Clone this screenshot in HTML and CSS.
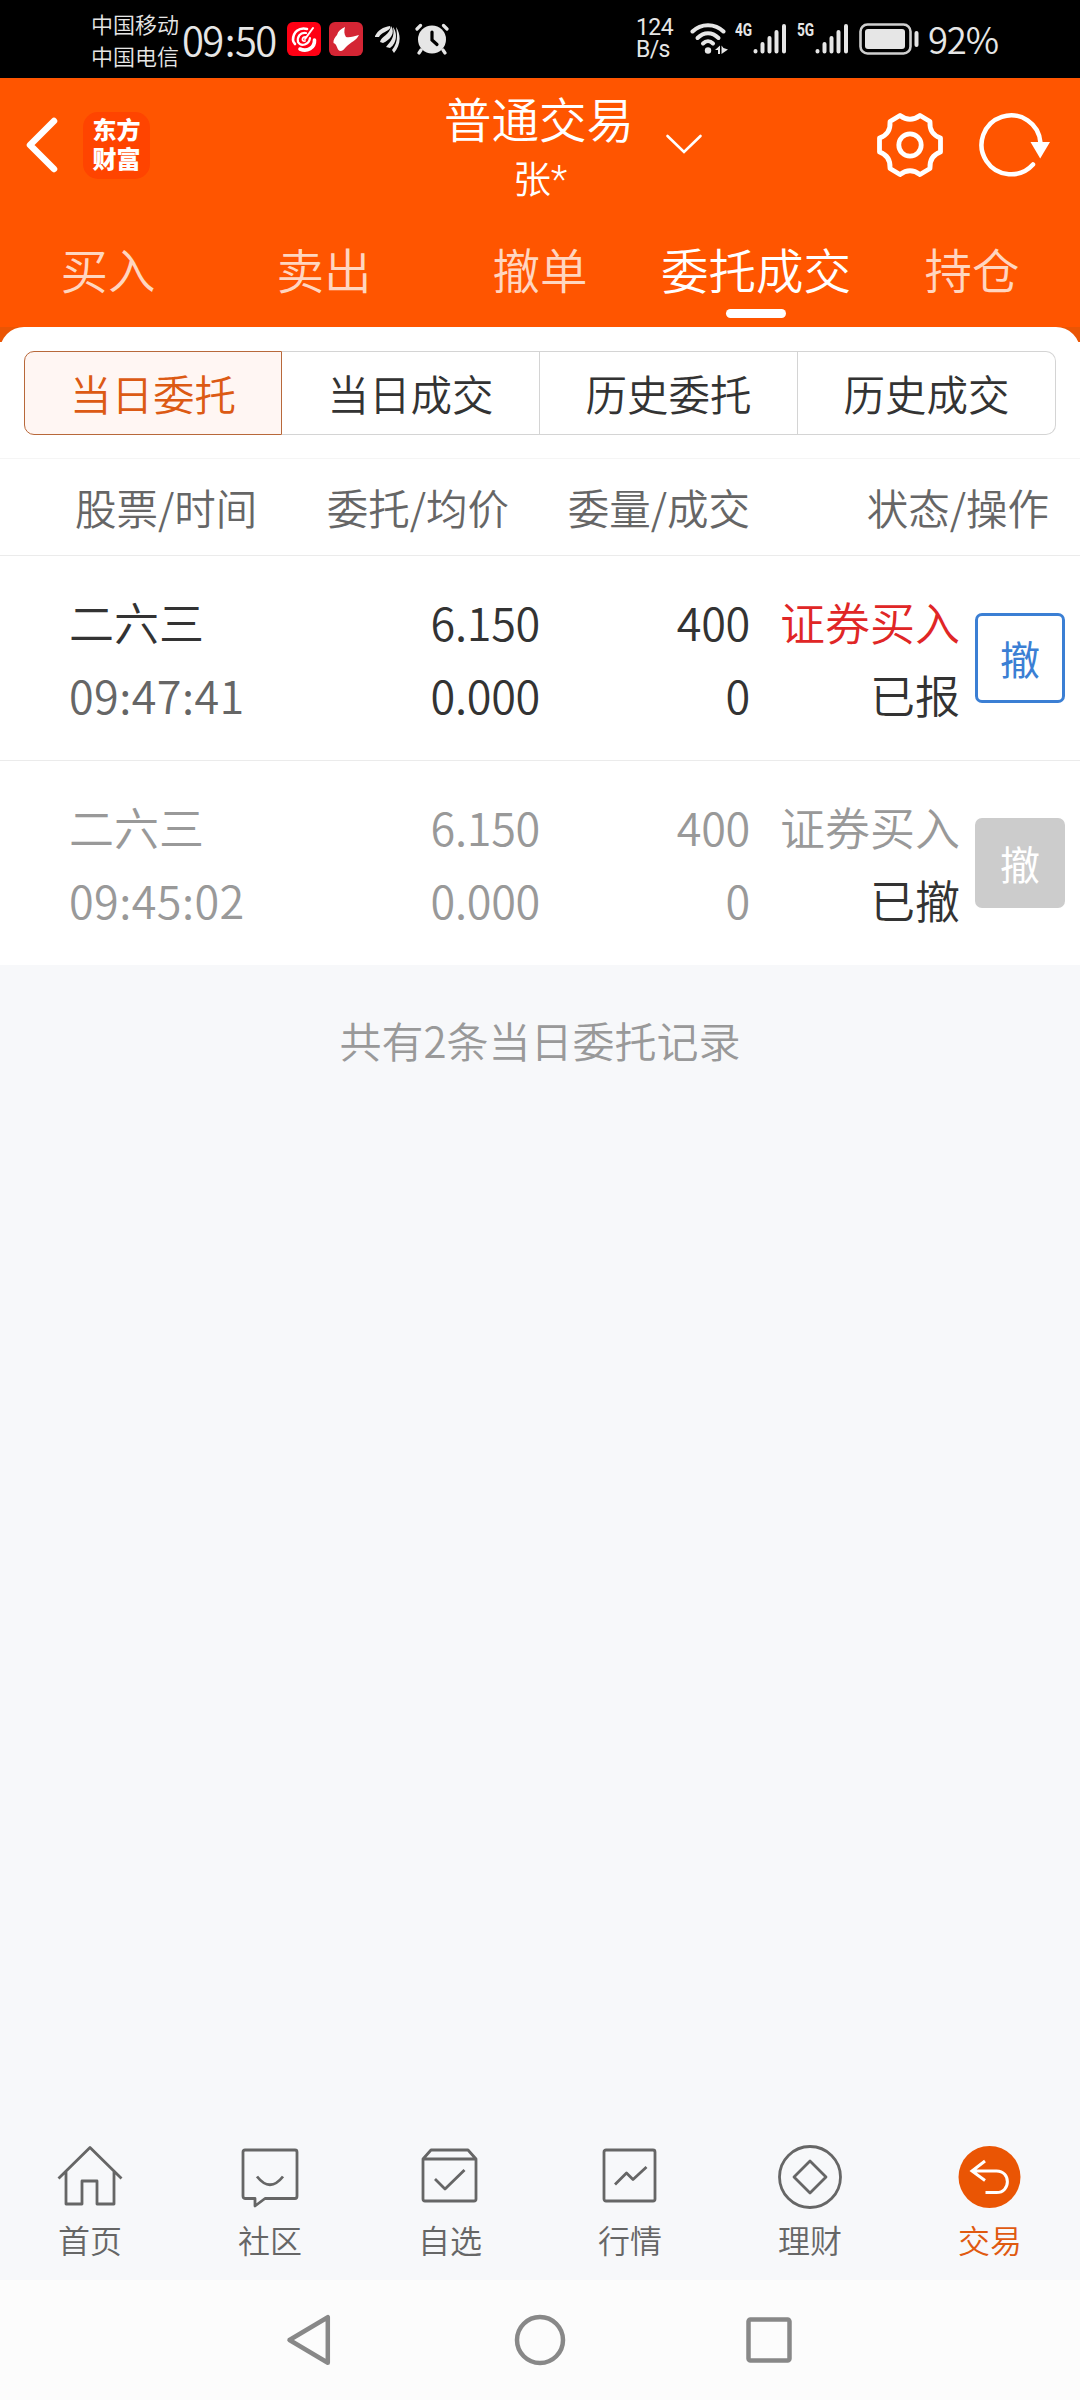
FILE: index.html
```html
<!DOCTYPE html>
<html lang="zh-CN">
<head>
    <meta charset="UTF-8">
    <meta name="viewport" content="width=device-width, initial-scale=1.0">
    <title>普通交易</title>
    <link rel="stylesheet" href="styles.css">
</head>

<body>
    <div class="status-bar">
        <div class="carrier">
            <span>中国移动</span>
            <span>中国电信</span>
        </div>
        <div class="clock">09<span class="colon">:</span>50</div>
        <div class="notices">
            <svg width="34" height="34" viewBox="0 0 34 34">
                <rect width="34" height="34" rx="6" fill="#ff0014"/>
                <g fill="none" stroke="#fff" stroke-linecap="round">
                    <path d="M20 7C12 5 6 10 6 18C6 20 7 21 8 22" stroke-width="2.600"/>
                    <path d="M13 27C20 30 28 26 27.500 18" stroke-width="3.600"/>
                    <path d="M19 11C13 10 10 15 11 20C14 25 22 23 23 16" stroke-width="2.200"/>
                    <path d="M26 6L18 17" stroke-width="2"/>
                    <path d="M19 15C15 14 14 20 18 19" stroke-width="1.800"/>
                </g>
            </svg>
            <svg width="34" height="34" viewBox="0 0 34 34">
                <rect width="34" height="34" rx="6" fill="#d42534"/>
                <path d="M16 5C15 9 15 12 17 15C21 16 25 14 30 13C27 19 22 20 18 24C15 27 14 29 11 29C7 27 9 23 4.500 21C4 18 6 15 8 13C9 9 12 7 16 5Z" fill="#fff"/>
            </svg>
            <svg class="leaf" width="26" height="30" viewBox="0 0 26 30" fill="#e6e6e6">
                <path d="M0 12C3 6 8 3 15 2C16 5 13 6 10 8C7 9 5 11 4 13L0 13Z"/>
                <path d="M5 18C6 12 15 11 16 2C21 9 15 16 8 19Z"/>
                <path d="M11 23C16 17 20 13 18 3C24 11 20 21 15 24Z"/>
                <path d="M17 26C22 20 23 14 21 3C27 12 25 22 19 29Z"/>
            </svg>
            <svg class="alarm" width="34" height="32" viewBox="0 0 34 32">
                <circle cx="17" cy="16.500" r="14" fill="#e6e6e6"/>
                <path d="M2 6L5.500 2.500M28.500 2.500L32 6M6 27L4 30M28 27L30 30" stroke="#e6e6e6" stroke-width="3.200" stroke-linecap="round"/>
                <path d="M17 9V17L22 21.500" fill="none" stroke="#000" stroke-width="3.200" stroke-linecap="round"/>
            </svg>
        </div>
        <div class="status-right">
            <div class="speed">
                <span>124</span>
                <span>B/s</span>
            </div>
            <svg class="wifi" width="40" height="34" viewBox="0 0 40 34">
                <g fill="none" stroke="#e6e6e6" stroke-width="4" stroke-linecap="round">
                    <path d="M2.500 9.500C11 1 25 1 33.500 9.500"/>
                    <path d="M7.500 16C14 9.500 22 9.500 28.500 16"/>
                    <path d="M13 21.500C16 18.500 20 18.500 23 21.500"/>
                </g>
                <circle cx="18" cy="28.500" r="3.200" fill="#e6e6e6"/>
                <path d="M25 28L30 23.500V32H28V28ZM31.500 23.500V32L38 27.500L33.500 26Z" fill="#e6e6e6"/>
            </svg>
            <span class="net"><span>4G</span></span>
            <svg class="bars" width="34" height="32" viewBox="0 0 34 32" stroke="#e6e6e6" stroke-width="4" stroke-linecap="round">
                <path d="M2.500 28V28.500M9.500 21V28.500M16.500 15V28.500M23.500 9V28.500M31 3V28.500"/>
            </svg>
            <span class="net net-5g"><span>5G</span></span>
            <svg class="bars" width="34" height="32" viewBox="0 0 34 32" stroke="#e6e6e6" stroke-width="4" stroke-linecap="round">
                <path d="M2.500 28V28.500M9.500 21V28.500M16.500 15V28.500M23.500 9V28.500M31 3V28.500"/>
            </svg>
            <svg class="battery" width="60" height="32" viewBox="0 0 60 32">
                <rect x="1.500" y="1.500" width="50" height="29" rx="7" fill="none" stroke="#cfcfcf" stroke-width="2.600"/>
                <rect x="6" y="6" width="40" height="20" rx="3" fill="#e6e6e6"/>
                <rect x="55.500" y="8" width="4" height="16" rx="2" fill="#e6e6e6"/>
            </svg>
            <span class="percent">92%</span>
        </div>
    </div>

    <div class="header">
        <div class="title-bar">
            <div class="title-left">
                <svg width="34" height="58" viewBox="0 0 34 58">
                    <path d="M30 5L6 29L30 53" fill="none" stroke="#fff" stroke-width="6.500" stroke-linecap="round" stroke-linejoin="round"/>
                </svg>
                <div class="logo"><span>东方</span><span>财富</span></div>
            </div>
            <div class="title">
                <div class="title-name">普通交易</div>
                <div class="title-user">张<span class="mask">*</span></div>
            </div>
            <div class="title-right">
                <svg class="arrow-down" width="40" height="24" viewBox="0 0 40 24">
                    <path d="M3.500 3L20 19L36.500 3" fill="none" stroke="#fff" stroke-width="2.600" stroke-linecap="round"/>
                </svg>
                <svg width="70" height="70" viewBox="0 0 70 70" fill="none" stroke="#fff" stroke-width="4.800" stroke-linejoin="round">
                    <path d="M25 5.500Q35 13 45 5.500L55 11.500Q54 24 65.500 28V42Q54 46 55 58.500L45 64.500Q35 57 25 64.500L15 58.500Q16 46 4.500 42V28Q16 24 15 11.500Z"/>
                    <circle cx="35" cy="35" r="11.200"/>
                </svg>
                <svg class="refresh" width="76" height="70" viewBox="0 0 76 70">
                    <path d="M57 54.500A29.500 29.500 0 1 1 64.500 33" fill="none" stroke="#fff" stroke-width="4.500" stroke-linecap="round"/>
                    <path d="M54.500 32H74L64.200 48.500Z" fill="#fff"/>
                </svg>
            </div>
        </div>
        <div class="tabs">
            <div class="tab">买入</div>
            <div class="tab">卖出</div>
            <div class="tab">撤单</div>
            <div class="tab tab-active">委托成交</div>
            <div class="tab">持仓</div>
        </div>
    </div>

    <div class="panel-wrap">
        <div class="panel">
            <div class="segments">
                <div class="segment segment-active">当日委托</div>
                <div class="segment">当日成交</div>
                <div class="segment">历史委托</div>
                <div class="segment">历史成交</div>
            </div>
            <div class="order-grid order-head">
                <div>股票/时间</div>
                <div class="right">委托/均价</div>
                <div class="right">委量/成交</div>
                <div class="right">状态/操作</div>
            </div>
            <div class="order-grid order">
                <div><p>二六三</p><p class="time">09:47:41</p></div>
                <div class="right number"><p>6.150</p><p>0.000</p></div>
                <div class="right number"><p>400</p><p>0</p></div>
                <div class="right"><p class="buy">证券买入</p><p class="state">已报</p></div>
                <div class="btn">撤</div>
            </div>
            <div class="order-grid order order-done">
                <div><p>二六三</p><p class="time">09:45:02</p></div>
                <div class="right number"><p>6.150</p><p>0.000</p></div>
                <div class="right number"><p>400</p><p>0</p></div>
                <div class="right"><p class="buy">证券买入</p><p class="state">已撤</p></div>
                <div class="btn">撤</div>
            </div>
        </div>
    </div>

    <div class="total">共有2条当日委托记录</div>

    <div class="bottom-bar">
        <div class="bottom-item">
            <svg width="70" height="70" viewBox="0 0 70 70">
                <path d="M3.500 36.500L35 5.500L66.500 36.500M11 30V62H27V39H42V62H59V30"/>
            </svg>
            <span>首页</span>
        </div>
        <div class="bottom-item">
            <svg width="70" height="70" viewBox="0 0 70 70">
                <path d="M10 8H60Q62 8 62 10V54Q62 56.500 60 56.500H30L20 64V56.500H10Q8 56.500 8 54V10Q8 8 10 8Z"/>
                <path d="M22 34.500Q35 51 48 34.500"/>
            </svg>
            <span>社区</span>
        </div>
        <div class="bottom-item">
            <svg width="70" height="70" viewBox="0 0 70 70">
                <path d="M8 17L16 8H53L61 17V57Q61 59 59 59H10Q8 59 8 57ZM8 17H61M20 37L30 47L49.500 28"/>
            </svg>
            <span>自选</span>
        </div>
        <div class="bottom-item">
            <svg width="70" height="70" viewBox="0 0 70 70">
                <rect x="9" y="8" width="51" height="51" rx="2"/>
                <path d="M20 42.500L31.500 31L38 37.500L51.500 25"/>
            </svg>
            <span>行情</span>
        </div>
        <div class="bottom-item">
            <svg width="70" height="70" viewBox="0 0 70 70">
                <circle cx="35" cy="35" r="30.500"/>
                <path d="M35 19L51 35L35 51L19 35Z"/>
            </svg>
            <span>理财</span>
        </div>
        <div class="bottom-item bottom-active">
            <svg width="70" height="70" viewBox="0 0 70 70">
                <circle class="dot" cx="34.500" cy="35" r="31"/>
                <path d="M30 19L17 29L30 38.500M18 29H41.500C56 29 56 50.500 41.500 50.500H30.500"/>
            </svg>
            <span>交易</span>
        </div>
    </div>

    <div class="nav-bar">
        <svg width="56" height="56" viewBox="0 0 56 56"><path d="M44.800 5.200V50.800L6.500 28Z"/></svg>
        <svg width="56" height="56" viewBox="0 0 56 56"><circle cx="28" cy="28" r="23"/></svg>
        <svg width="56" height="56" viewBox="0 0 56 56"><rect x="7.500" y="7.500" width="41" height="41" rx="2"/></svg>
    </div>
</body>

</html>
```

FILE: styles.css
```css
* {
    box-sizing: border-box;
}

body {
    display: flex;
    flex-direction: column;
    width: 1080px;
    height: 2400px;
    margin: 0;
    background-color: #f7f8fa;
    color: #333;
    font-family: "Noto Sans CJK SC", sans-serif;
    font-weight: 350;
    overflow: hidden;
}

p {
    margin: 0;
}

svg {
    display: block;
    flex: none;
}

/* Phone status bar */
.status-bar {
    display: flex;
    align-items: center;
    height: 78px;
    padding-left: 91px;
    background-color: #000;
    color: #e6e6e6;
}

.carrier {
    display: flex;
    flex-direction: column;
    width: 91px;
    font-size: 22px;
    line-height: 32px;
    white-space: nowrap;
}

.clock {
    width: 105px;
    font-size: 40px;
    line-height: 58px;
    letter-spacing: -1.600px;
    white-space: nowrap;
}

.colon {
    margin: 0 1px 0 2px;
}

.notices {
    display: flex;
    align-items: center;
}

.notices svg + svg {
    margin-left: 8px;
}

.notices .leaf {
    margin-left: 12px;
}

.notices .alarm {
    margin-left: 14px;
}

.status-right {
    display: flex;
    align-items: center;
    margin-left: 187px;
}

.speed {
    display: flex;
    flex-direction: column;
    width: 54px;
    padding-bottom: 1px;
    font-family: Roboto, sans-serif;
    font-weight: 400;
    font-size: 23px;
    line-height: 22px;
    letter-spacing: -0.600px;
}

.net {
    width: 18px;
    margin: -18px 0 0 5px;
    font-family: Roboto, sans-serif;
    font-size: 19px;
    font-weight: 700;
    line-height: 20px;
}

/* squeeze the label to the narrow badge width */
.net span {
    display: inline-block;
    transform: scaleX(0.72);
    transform-origin: left;
}

.net-5g {
    margin-left: 10px;
}

.battery {
    margin-left: 10px;
}

.percent {
    margin-left: 9px;
    font-size: 36.500px;
    line-height: 60px;
    letter-spacing: -1.200px;
}

/* Orange header */
.header {
    height: 249px;
    background-color: #ff5500;
    color: #fff;
}

.title-bar {
    display: grid;
    grid-template-columns: 360px 360px 360px;
    height: 154px;
}

.title-left {
    display: flex;
    align-items: center;
    height: 134px;
    padding-left: 24px;
}

.logo {
    display: flex;
    flex-direction: column;
    align-items: center;
    justify-content: center;
    width: 67px;
    height: 67px;
    margin-left: 25px;
    padding-bottom: 4px;
    border-radius: 15px;
    background-color: #ff4400;
    font-size: 24px;
    font-weight: 900;
    line-height: 29px;
}

.title {
    padding-top: 8px;
    text-align: center;
}

.title-name {
    font-size: 47.500px;
    line-height: 64px;
    margin-left: -2px;
}

.title-user {
    font-size: 38px;
    line-height: 54px;
}

.mask {
    font-family: Roboto, sans-serif;
    font-weight: 300;
}

.title-right {
    display: flex;
    align-items: center;
    height: 134px;
}

.arrow-down {
    margin: 0 171px 0 -56px;
}

.refresh {
    margin-left: 31px;
}

.tabs {
    display: grid;
    grid-template-columns: repeat(5, 216px);
    height: 95px;
}

.tab {
    color: #ffd6c0;
    font-size: 47.500px;
    line-height: 74px;
    text-align: center;
}

.tab-active {
    color: #fff;
}

.tab-active::after {
    content: "";
    display: block;
    width: 60px;
    height: 9px;
    margin: 3px auto 0;
    border-radius: 5px;
    background-color: #fff;
}

/* Order list */
.panel-wrap {
    background: linear-gradient(#ea5504 15px, #fff 15px);
}

.panel {
    padding-top: 24px;
    border-radius: 24px 24px 0 0;
    background-color: #fff;
}

.segments {
    display: grid;
    grid-template-columns: repeat(4, 258px);
    height: 84px;
    margin: 0 24px 23px;
}

.segment {
    border: 1px solid #d4d4d4;
    border-left-width: 0;
    font-size: 41.500px;
    line-height: 82px;
    text-align: center;
}

.segment-active {
    border: 1px solid #b8683a;
    border-radius: 10px 0 0 10px;
    background-color: #fff6f3;
    color: #dc5a14;
}

.segment:last-child {
    border-radius: 0 10px 10px 0;
}

.order-grid {
    display: grid;
    grid-template-columns: 271px 200px 210px 210px 105px;
    padding-left: 69px;
    border-top: 1px solid #ebebeb;
}

.right {
    text-align: right;
}

.order-head {
    grid-template-columns: 234px 200px 241px 299px;
    height: 97px;
    padding-left: 75px;
    border-top-color: #f5f5f5;
    color: #666;
    font-size: 41.500px;
    line-height: 96px;
}

.order {
    height: 205px;
    padding-top: 29px;
    font-size: 45px;
    line-height: 73px;
}

.number {
    letter-spacing: -0.300px;
}

.time {
    color: #666;
    letter-spacing: 0.400px;
}

.buy {
    color: #e02626;
}

.btn {
    width: 90px;
    height: 90px;
    margin: 28px 0 0 15px;
    border: 3px solid #3b7fd4;
    border-radius: 7px;
    color: #3b7fd4;
    font-size: 40px;
    font-weight: 400;
    line-height: 84px;
    text-align: center;
}

.order-done,
.order-done .time,
.order-done .buy {
    color: #999;
}

.order-done .state {
    color: #333;
}

.order-done .btn {
    border-color: #ccc;
    background-color: #ccc;
    color: #fff;
}

.total {
    padding-top: 45px;
    color: #999;
    font-size: 42px;
    line-height: 60px;
    text-align: center;
}

/* App bottom tabs */
.bottom-bar {
    display: grid;
    grid-template-columns: repeat(6, 180px);
    height: 146px;
    margin-top: auto;
}

.bottom-item {
    display: flex;
    flex-direction: column;
    align-items: center;
    padding-top: 8px;
    color: #666;
    font-size: 32px;
    line-height: 54px;
}

.bottom-item svg {
    fill: none;
    stroke: #666;
    stroke-width: 2.800;
    stroke-linejoin: round;
}

.bottom-active {
    color: #e05a10;
}

.bottom-active svg {
    stroke: #fff;
    stroke-width: 3;
    stroke-linejoin: miter;
}

.bottom-active .dot {
    fill: #ea5504;
    stroke: none;
}

/* System navigation */
.nav-bar {
    display: flex;
    justify-content: center;
    gap: 173px;
    height: 120px;
    padding-top: 32px;
    background-color: #fcfcfc;
}

.nav-bar svg {
    fill: none;
    stroke: #888;
    stroke-width: 4.500;
    stroke-linejoin: round;
}
```
